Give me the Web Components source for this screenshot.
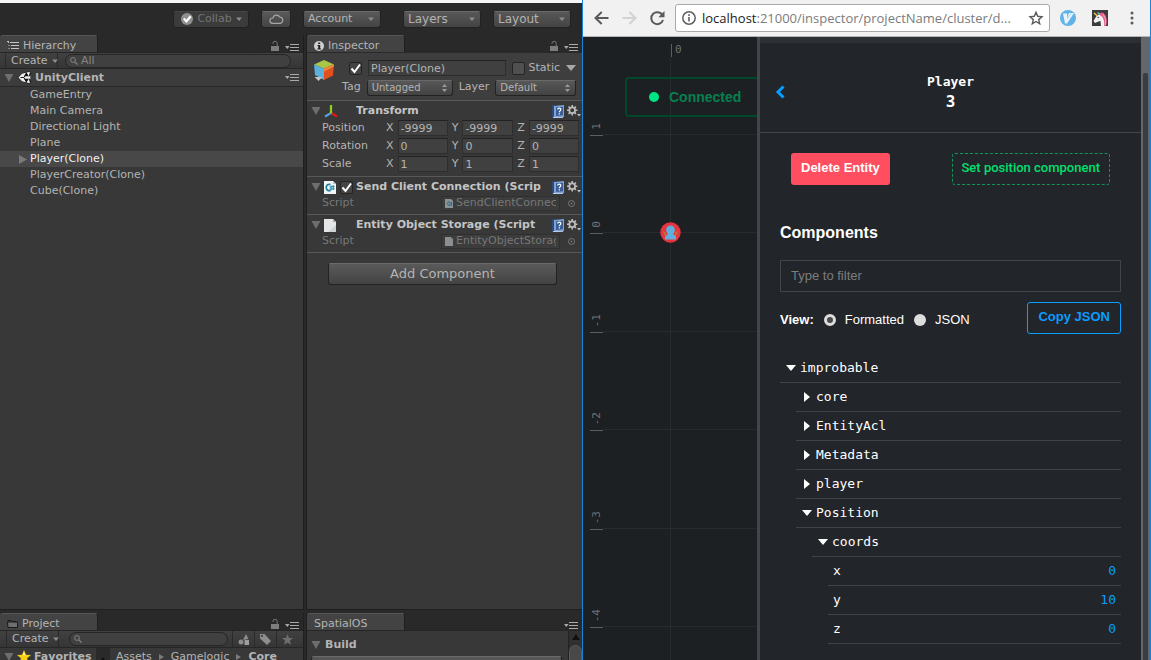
<!DOCTYPE html>
<html lang="en">
<head>
<meta charset="utf-8">
<title>Unity and SpatialOS Inspector</title>
<style>
body { margin: 0; height: 100vh; overflow: hidden; background: #292929; }
desktop-view { height: 100%; }
</style>
</head>
<body>
<desktop-view></desktop-view>
<script>
const define = (name, css, html) => {
  const tpl = document.createElement('template');
  tpl.innerHTML = `<style>*{box-sizing:border-box}:host{box-sizing:border-box}${css}</style>${html}`;
  customElements.define(name, class extends HTMLElement {
    constructor() {
      super();
      this.attachShadow({ mode: 'open' }).append(tpl.content.cloneNode(true));
    }
  });
};

/* ---------- icons: [width, height, drawing] ---------- */
const ICONS = {
  caret: [6, 4, '<path d="M0 0.500h6L3 4z" fill="#8c8c8c"/>'],
  drop: [10, 6, '<path d="M0 0h10L5 6z" fill="#a8a8a8"/>'],
  foldopen: [10, 8, '<path d="M0.5 0h9L5 8z" fill="#6e6e6e"/>'],
  foldclosed: [8, 9, '<path d="M0 0l8 4.5L0 9z" fill="#7a7a7a"/>'],
  updown: [5, 8, '<path d="M2.5 0L5 3H0zM0 5h5L2.5 8z" fill="#9a9a9a"/>'],
  lock: [8, 10, '<path d="M0 5h8v5H0z" fill="#7d7d7d"/><path d="M2 3V2.4a2.1 2.1 0 0 1 4.2 0V5" fill="none" stroke="#777" stroke-width="1"/>'],
  menu: [14, 7, '<path d="M0 2h4.6L2.3 5z" fill="#aaa"/><path d="M5 .5h9M5 3.500h9M5 6.500h9" stroke="#aaa" stroke-width="1"/>'],
  hier: [12, 9, '<path d="M0 .5h2M3 1.500h9M4 4.500h8M4 7.500h8M1.500 1v1M1.500 4.500h1M1.500 7.500h1" stroke="#c4c4c4"/>'],
  info: [10, 10, '<circle cx="5" cy="5" r="5" fill="#d0d0d0"/><path d="M4.200 1.500h2v1.500h-2zM3.500 4h2.700v3.500H7v1H3.300v-1h.9V5h-.7z" fill="#222"/>'],
  folder: [11, 9, '<path d="M1 3.500V1.500h3l1 1h4v1" fill="none" stroke="#1c1c1c"/><path d="M.5 3h10v5.500H1z" fill="#6f6f6f" stroke="#1a1a1a"/>'],
  search: [8, 8, '<circle cx="3" cy="3" r="2.400" fill="none" stroke="#848484"/><path d="M5 5l2.600 2.600" stroke="#848484" stroke-width="1.300"/>'],
  unity: [13, 13, '<path d="M0 6.500L4 2.500l8-2.500 1 3v7l-1 3-8-2.500z" fill="#111"/><path d="M.5 6.500L4 2.800l4-1-1.800 3.500H12l-.2-4.300.7 5.500-.7 5.500.2-4.300H6.200L8 11.200l-4-1z" fill="#eee"/><path d="M12 .8l-3.500.8L10.800 5.200zM12 12.200l-3.500-.8 2.300-3.600z" fill="#eee"/><path d="M2.500 6.500h3.300L8 3M5.800 6.500L8 10" stroke="#111" fill="none"/>'],
  collab: [12, 12, '<circle cx="6" cy="6" r="6" fill="#909090"/><path d="M2.800 5.600l2.600 2.800 4.300-5.200" fill="none" stroke="#fff" stroke-width="2.200"/>'],
  cloud: [15, 10, '<path d="M3.500 9.400a2.700 2.700 0 0 1 .3-5.400A3.800 3.800 0 0 1 10.800 3 3.300 3.300 0 0 1 11.500 9.400z" fill="none" stroke="#a6a6a6" stroke-width="1.200"/>'],
  cube: [22, 21, '<path d="M1 4.500L11 0l10 4.500-10 4z" fill="#a9c646"/><path d="M1 4.500l10 4V20L2 15z" fill="#5bb1dc"/><path d="M21 4.500l-10 4V20l9-4.500z" fill="#e2501d"/><path d="M21 4.500l-10 4v3l10-5z" fill="#f08a3c"/><path d="M1.500 17h8l-4 4z" fill="#c4c4c4"/>'],
  axis: [14, 13, '<path d="M7 8L1 11.500" stroke="#4aa0e8" stroke-width="2.200"/><path d="M7 8l6 3.500" stroke="#e01818" stroke-width="2.200"/><path d="M7 0v8.500" stroke="#8fd018" stroke-width="2.200"/>'],
  book: [12, 13, '<path d="M0 0h3v13H0z" fill="#2c4a78"/><path d="M2 1l10-1v12L2 13z" fill="#7fa4d4"/><path d="M4 2.300l7-.5v8.400l-7 .7z" fill="#3a5d95"/><path d="M5.600 4.500c.3-1.800 3.300-1.700 3.200.1 0 1.300-1.500 1.200-1.500 2.600M7.300 8.200v1.400" fill="none" stroke="#fff" stroke-width="1.200"/><path d="M1 12.500h10" stroke="#cfe0f5" stroke-width=".8"/>'],
  gear: [14, 12, '<circle cx="5.200" cy="5.200" r="2.900" fill="none" stroke="#bdbdbd" stroke-width="1.800"/><g stroke="#bdbdbd" stroke-width="1.600"><path d="M5.200 0v2M5.200 8.400v2M0 5.200h2M8.400 5.200h2M1.500 1.500L3 3M7.400 7.400l1.500 1.500M1.500 8.900L3 7.400M7.400 3l1.500-1.500"/></g><path d="M10 9h4l-2 2.500z" fill="#bdbdbd"/>'],
  cs: [12, 13, '<path d="M0 0h9l3 3v10H0z" fill="#f2f5f6"/><path d="M9 0v3h3z" fill="#b8c2c8"/><path d="M6.500 3.600A3 3.200 0 1 0 6.500 9.400" fill="none" stroke="#167f9f" stroke-width="1.700"/><path d="M7 4.500v5M9.200 4v5M5.600 6l5-.4M5.600 8.200l5-.4" stroke="#167f9f" stroke-width=".9"/>'],
  doc: [12, 13, '<path d="M0 0h9l3 3v10H0z" fill="#e4e6e7"/><path d="M9 0v3h3z" fill="#a5a9ab"/><path d="M12 6v7H4z" fill="#cfd2d3"/>'],
  cssmall: [8, 9, '<path d="M0 0h6l2 2v7H0z" fill="#8b9296"/><path d="M4.500 2.600a2 2 0 1 0 0 4M5 3v4M6.500 3v4" fill="none" stroke="#2c6f88"/>'],
  docsmall: [8, 9, '<path d="M0 0h6l2 2v7H0z" fill="#8c8e8f"/><path d="M6 0v2h2z" fill="#666"/>'],
  target: [7, 7, '<circle cx="3.500" cy="3.500" r="3" fill="none" stroke="#7c7c7c" stroke-width=".9"/><circle cx="3.500" cy="3.500" r=".8" fill="#8a8a8a"/>'],
  filter: [11, 11, '<circle cx="3" cy="8" r="2.500" fill="#8d8d8d"/><path d="M5 6l3-6 2.500 5z" fill="#8d8d8d"/><path d="M6.500 6h4.500v5H6.500z" fill="#9d9d9d"/>'],
  tag: [11, 11, '<path d="M0 0h4.500L11 7l-4 4L0 4.500z" fill="#8d8d8d"/><circle cx="2" cy="2" r="1" fill="#333"/>'],
  star: [11, 11, '<path d="M5.500 0l1.500 3.900 4 .2L7.900 6.700 9 10.800 5.500 8.500 2 10.800l1.100-4.100L0 4.100l4-.2z" fill="#6e6e6e"/>'],
  fav: [14, 14, '<path d="M7 0l2 4.700 5 .4-3.900 3.200L11.400 13.500 7 10.600l-4.400 2.900L3.900 8.300 0 5.100l5-.4z" fill="#f7cf12"/><path d="M7 1.500l1.300 3.700-2.600.3z" fill="#fff3a0"/>'],
  crumb: [5, 6, '<path d="M0 0l5 3-5 3z" fill="#7c7c7c"/>'],
  scrollup: [8, 6, '<path d="M4 0l4 6H0z" fill="#111"/>'],
  back: [15, 14, '<path d="M14.500 7H2M7.700 1L1.500 7l6.200 6" fill="none" stroke="#5a5a5a" stroke-width="2"/>'],
  forward: [15, 14, '<path d="M.5 7H13M7.300 1l6.200 6-6.200 6" fill="none" stroke="#d2d2d2" stroke-width="2"/>'],
  reload: [15, 14, '<path d="M12.500 4.200A6 6 0 1 0 13 9" fill="none" stroke="#5a5a5a" stroke-width="2"/><path d="M14.500 0v6.200H8.300z" fill="#5a5a5a"/>'],
  site: [14, 14, '<circle cx="7" cy="7" r="6.200" fill="none" stroke="#5f5f5f" stroke-width="1.500"/><path d="M7 6v4.500M7 3.300v1.600" stroke="#5f5f5f" stroke-width="1.600"/>'],
  bookmark: [14, 14, '<path d="M7 1.300l1.700 4 4.300.4-3.300 2.900 1 4.200L7 10.500l-3.700 2.300 1-4.200L1 5.700l4.300-.4z" fill="none" stroke="#5a5a5a" stroke-width="1.400"/>'],
  vim: [16, 16, '<circle cx="8" cy="8" r="8" fill="#62b3e6"/><path d="M3 3.500h4l.3 5.500L11.500 3H14L7 13.500H5z" fill="#e9f5fc"/><path d="M9 3l2 0-4 5.800z" fill="#f9fdff"/>'],
  unicorn: [16, 16, '<path d="M0 0h16v16H0z" fill="#3c3c3c"/><path d="M1.500 11l3-5L8 4l4 4 1 8H9l-.5-5-2 .5-3.500 1.500z" fill="#f3f0f2"/><path d="M7 3l4-.5 3 3.500 1 6-1 4h-2l.5-4-2-5L7 4.500z" fill="#e85b86"/><path d="M11 4l2.500 5-.3 6" fill="none" stroke="#f6a5bd"/><path d="M2 3l3.500 3" stroke="#f1c84b" stroke-width="1.500"/><path d="M5.500 2.500l2 2" stroke="#53c3c4" stroke-width="1.500"/><circle cx="6.200" cy="7.500" r=".7" fill="#333"/>'],
  dots: [4, 14, '<circle cx="2" cy="2" r="1.500" fill="#5a5a5a"/><circle cx="2" cy="7" r="1.500" fill="#5a5a5a"/><circle cx="2" cy="12" r="1.500" fill="#5a5a5a"/>'],
  chevron: [9, 14, '<path d="M7.500 1.500L2 7l5.500 5.500" fill="none" stroke="#0a9cff" stroke-width="3"/>'],
  treeopen: [10, 6, '<path d="M0 0h10L5 6z" fill="#fff"/>'],
  treeclosed: [6, 10, '<path d="M0 0l6 5-6 5z" fill="#fff"/>'],
  player: [21, 21, '<circle cx="10.500" cy="10.500" r="10.200" fill="#e8343c"/><path d="M3 9l3 1.500v4l-2-2zM18 9l-3 1.500v4l2-2z" fill="#b0743c"/><path d="M10.500 3.500a4.200 4.200 0 0 1 4.300 4.500c0 2-1 3.200-1.800 4l3 2.500v3H5v-3L8 12C7.200 11.200 6.200 10 6.200 8a4.200 4.200 0 0 1 4.300-4.500z" fill="#5fb0dc"/>'],
};
customElements.define('ui-icon', class extends HTMLElement {
  constructor() { super(); this.attachShadow({ mode: 'open' }); }
  connectedCallback() {
    const [w, h, body] = ICONS[this.getAttribute('name')];
    this.shadowRoot.innerHTML = `<style>:host{display:inline-block;flex:none}svg{display:block;overflow:visible}</style>
      <svg width="${w}" height="${h}" viewBox="0 0 ${w} ${h}" aria-hidden="true">${body}</svg>`;
  }
});

/* ---------- shared Unity controls ---------- */
define('unity-button', `
  :host{display:block;height:17px}
  button{display:flex;align-items:center;justify-content:var(--justify,space-between);gap:4px;width:100%;height:100%;padding:var(--pad,0 6px);
    font:inherit;color:inherit;border:1px solid #222;border-top-color:#6a6a6a;border-radius:3px;background:linear-gradient(#5a5a5a,#434343)}
  :host([dim]) button{background:#3b3b3b;border-top-color:#444;color:#757575}
  :host([flat]) button{background:none;border:0;border-radius:0}`,
  `<button type="button"><slot></slot></button>`);

customElements.define('unity-select', class extends HTMLElement {
  constructor() { super(); this.attachShadow({ mode: 'open' }); }
  connectedCallback() {
    this.shadowRoot.innerHTML = `<style>
      :host{display:grid;align-items:center;height:17px}
      select,ui-icon{grid-area:1/1}
      select{appearance:none;box-sizing:border-box;width:100%;height:100%;margin:0;padding:0 16px 0 4px;font:inherit;color:inherit;
        border:1px solid #222;border-top-color:#6a6a6a;border-radius:3px;background:linear-gradient(#585858,#434343)}
      ui-icon{justify-self:end;margin-right:6px;pointer-events:none}</style>
      <select aria-label="${this.getAttribute('label')}"><option>${this.getAttribute('value')}</option></select>
      <ui-icon name="${this.getAttribute('icon')}"></ui-icon>`;
  }
});

customElements.define('unity-field', class extends HTMLElement {
  constructor() { super(); this.attachShadow({ mode: 'open' }); }
  connectedCallback() {
    const axis = this.getAttribute('axis');
    this.shadowRoot.innerHTML = `<style>
      :host{display:block;min-width:0}
      label{display:flex;align-items:center;gap:4px}
      input{flex:1;min-width:0;width:100%;height:16px;box-sizing:border-box;margin:0;padding:0 2px;font:inherit;color:inherit;
        border:1px solid #2d2d2d;border-top-color:#222;background:#404040}</style>
      <label>${axis ? `<span>${axis}</span>` : ''}<input value="${this.getAttribute('value')}" aria-label="${this.getAttribute('label')}"></label>`;
  }
});

define('unity-check', `
  :host{display:block;width:13px;height:13px}
  input{appearance:none;display:block;width:13px;height:13px;margin:0;border:1px solid #242424;border-radius:2px;background:#505050}
  :host([on]) input{background:#444 url('data:image/svg+xml,<svg xmlns="http://www.w3.org/2000/svg" viewBox="0 0 11 11"><path d="M1.500 5.500l3 3.500L10 1.500" fill="none" stroke="white" stroke-width="2"/></svg>') center/11px no-repeat}`,
  `<input type="checkbox" aria-label="Enabled">`);
const mark = root => root.querySelectorAll('unity-check[on]').forEach(c => c.shadowRoot.querySelector('input').checked = true);

define('panel-tabs', `
  :host{display:flex;align-items:flex-end;justify-content:space-between;height:17px;background:#292929;flex:none}
  .tab{display:flex;align-items:center;gap:4px;width:98px;height:17px;padding:3px 7px 0;background:#434343;border-top:1px solid #565656;
    border-right:1px solid #1f1f1f;border-radius:3px 3px 0 0}
  .tools{display:flex;align-items:flex-end;gap:6px;padding:0 4px 1px 0}`,
  `<div class="tab"><slot></slot></div><div class="tools"><slot name="lock"></slot><ui-icon name="menu"></ui-icon></div>`);

define('search-box', `
  :host{display:block;flex:1;min-width:0}
  label{display:flex;align-items:center;height:14px;padding:0 4px;gap:3px;border:1px solid #252525;border-radius:7px;background:#404040}
  input{flex:1;min-width:0;border:0;padding:0;background:none;font:inherit;color:#858585;outline:0}
  input::placeholder{color:#858585;opacity:1}`,
  `<label><ui-icon name="search"></ui-icon><slot></slot><input type="text" aria-label="Search"></label>`);

/* ---------- Unity toolbar ---------- */
define('unity-toolbar', `
  :host{display:flex;justify-content:flex-end;align-items:center;gap:12px;height:35px;flex:none;border-top:3px solid #f6f6f6;padding:0 11px;font-size:12px}
  .collab{width:76px;font-size:11px;--pad:0 6px 0 7px}
  .cloud{width:30px;--justify:center}
  .menu{width:78px}
  .account{margin-right:10px;font-size:11px;--pad:0 6px 0 4px}`,
  `<unity-button class="collab" dim><ui-icon name="collab"></ui-icon><span>Collab</span><ui-icon name="caret"></ui-icon></unity-button>
   <unity-button class="cloud"><ui-icon name="cloud"></ui-icon></unity-button>
   <unity-button class="menu account"><span>Account</span><ui-icon name="caret"></ui-icon></unity-button>
   <unity-select class="menu" label="Layers" value="Layers" icon="caret"></unity-select>
   <unity-select class="menu" label="Layout" value="Layout" icon="caret"></unity-select>`);

/* ---------- Hierarchy ---------- */
define('hierarchy-panel', `
  :host{display:flex;flex-direction:column;min-width:0;background:#383838;border-right:1px solid #1f1f1f;border-bottom:1px solid #1f1f1f}
  .bar{display:flex;align-items:center;height:17px;padding:0 12px 0 5px;background:linear-gradient(#414141,#353535);border-top:1px solid #262626;border-bottom:1px solid #262626}
  .create{width:53px;height:15px;margin-right:7px;border:solid #2a2a2a;border-width:0 1px;--pad:0 3px 0 5px}
  .scene{display:flex;align-items:center;gap:4px;height:18px;padding:0 4px;font-weight:bold;border-bottom:1px solid #282828;background:#3c3c3c}
  .scene ui-icon:last-child{margin-left:auto}
  ul{list-style:none;margin:0;padding:0}
  li{display:flex;align-items:center;height:16px;padding-left:30px}
  li.on{background:#484848;color:#f0f0f0;padding-left:19px;gap:3px}`,
  `<panel-tabs><ui-icon name="hier"></ui-icon>Hierarchy<ui-icon slot="lock" name="lock"></ui-icon></panel-tabs>
   <div class="bar"><unity-button flat class="create">Create<ui-icon name="caret"></ui-icon></unity-button><search-box></search-box></div>
   <div class="scene"><ui-icon name="foldopen"></ui-icon><ui-icon name="unity"></ui-icon><span>UnityClient</span><ui-icon name="menu"></ui-icon></div>
   <ul><li>GameEntry</li><li>Main Camera</li><li>Directional Light</li><li>Plane</li>
   <li class="on"><ui-icon name="foldclosed"></ui-icon>Player(Clone)</li><li>PlayerCreator(Clone)</li><li>Cube(Clone)</li></ul>`);

/* ---------- Inspector ---------- */
define('component-head', `
  :host{display:grid;grid-template-columns:10px 13px 13px minmax(0,1fr) 12px 14px;column-gap:3px;align-items:center;height:18px;padding:2px 1px 0 4px}
  h2{margin:0;font-size:inherit;font-weight:bold;white-space:nowrap;overflow:hidden;color:#c4c4c4}
  .check{display:block}`,
  `<ui-icon name="foldopen"></ui-icon><slot name="icon"></slot><span class="check"><slot name="check"></slot></span>
   <h2><slot></slot></h2><ui-icon name="book"></ui-icon><ui-icon name="gear"></ui-icon>`);

define('script-row', `
  :host{display:flex;align-items:center;height:16px;padding:0 7px 0 15px;color:#777}
  .name{flex:1}
  .object{display:flex;align-items:center;gap:3px;width:119px;height:15px;margin-right:8px;padding:0 3px;overflow:hidden;white-space:nowrap;background:#3c3c3c;border:1px solid #303030}
  .object span{overflow:hidden}`,
  `<span class="name">Script</span><div class="object"><slot name="icon"></slot><span><slot></slot></span></div><ui-icon name="target"></ui-icon>`);

define('inspector-panel', `
  :host{display:flex;flex-direction:column;min-width:0;overflow:hidden;background:#383838;border-left:1px solid #1f1f1f;border-bottom:1px solid #1f1f1f}
  header{height:48px;padding:7px 6px 0;border-top:1px solid #2a2a2a;background:#3e3e3e;display:grid;grid-template-columns:22px minmax(0,1fr);column-gap:7px}
  .row{display:flex;align-items:center;gap:6px;height:16px;padding-left:7px}
  .row+.row{margin-top:3px;padding-left:0}
  .grow{flex:1}
  .static{display:flex;align-items:center;gap:4px}
  .tags unity-select{height:15px;font-size:10px}
  .tag{width:86px}.layer{flex:1}
  section{border-top:1px solid #585858;padding-bottom:3px}
  .vec{display:grid;grid-template-columns:60px repeat(3,minmax(0,1fr));column-gap:4px;align-items:center;height:18px;padding:0 3px 0 15px}
  .last{border-top:1px solid #585858;padding:10px 25px 0 21px}
  .last unity-button{height:22px;font-size:13px;--justify:center}`,
  `<panel-tabs><ui-icon name="info"></ui-icon>Inspector<ui-icon slot="lock" name="lock"></ui-icon></panel-tabs>
   <header><ui-icon name="cube"></ui-icon><div>
     <div class="row"><unity-check on></unity-check><unity-field class="grow" label="Name" value="Player(Clone)"></unity-field><span class="static"><unity-check></unity-check>Static</span><ui-icon name="drop"></ui-icon></div>
     <div class="row tags"><span>Tag</span><unity-select class="tag" label="Tag" value="Untagged" icon="updown"></unity-select><span>Layer</span><unity-select class="layer" label="Layer" value="Default" icon="updown"></unity-select></div>
   </div></header>
   <section><component-head><ui-icon slot="icon" name="axis"></ui-icon>Transform</component-head>
     ${[['Position', '-9999'], ['Rotation', '0'], ['Scale', '1']].map(([n, v]) =>
       `<div class="vec"><span>${n}</span>${['X', 'Y', 'Z'].map(a => `<unity-field axis="${a}" label="${n} ${a}" value="${v}"></unity-field>`).join('')}</div>`).join('')}
     </section>
   <section><component-head><ui-icon slot="icon" name="cs"></ui-icon><unity-check slot="check" on></unity-check>Send Client Connection (Scrip</component-head>
     <script-row><ui-icon slot="icon" name="cssmall"></ui-icon>SendClientConnec</script-row></section>
   <section><component-head><ui-icon slot="icon" name="doc"></ui-icon>Entity Object Storage (Script</component-head>
     <script-row><ui-icon slot="icon" name="docsmall"></ui-icon>EntityObjectStorag</script-row></section>
   <div class="last"><unity-button>Add Component</unity-button></div>`);

/* ---------- Project ---------- */
define('project-panel', `
  :host{display:flex;flex-direction:column;min-width:0;overflow:hidden;background:#383838;border-right:1px solid #1f1f1f}
  .bar{display:flex;align-items:center;flex:none;height:18px;padding:0 5px 0 6px;background:linear-gradient(#414141,#353535);border-top:1px solid #262626;border-bottom:1px solid #262626}
  .create{width:53px;height:16px;margin-right:10px;border:solid #2a2a2a;border-width:0 1px;--pad:0 3px 0 5px}
  search-box{margin-right:4px}
  .tool{width:22px;height:16px;border-left:1px solid #2a2a2a;--justify:center;--pad:0}
  .body{display:grid;grid-template-columns:96px 14px minmax(0,1fr);flex:1}
  .fav,nav{display:flex;align-items:center;height:18px}
  .fav{padding-left:4px;gap:3px;font-weight:bold;overflow:hidden}
  .scroll{background:#2a2a2a;padding:5px 3px}
  nav{padding-left:6px;gap:7px}
  a{color:inherit;text-decoration:none}`,
  `<panel-tabs><ui-icon name="folder"></ui-icon>Project<ui-icon slot="lock" name="lock"></ui-icon></panel-tabs>
   <div class="bar"><unity-button flat class="create">Create<ui-icon name="caret"></ui-icon></unity-button><search-box></search-box>
   <unity-button flat class="tool"><ui-icon name="filter"></ui-icon></unity-button><unity-button flat class="tool"><ui-icon name="tag"></ui-icon></unity-button><unity-button flat class="tool"><ui-icon name="star"></ui-icon></unity-button></div>
   <div class="body"><div class="fav"><ui-icon name="foldopen"></ui-icon><ui-icon name="fav"></ui-icon>Favorites</div><div class="scroll"><ui-icon name="scrollup"></ui-icon></div>
   <nav><a href="#assets">Assets</a><ui-icon name="crumb"></ui-icon><a href="#gamelogic">Gamelogic</a><ui-icon name="crumb"></ui-icon><a href="#core"><b>Core</b></a></nav></div>`);

define('spatial-panel', `
  :host{display:flex;flex-direction:column;min-width:0;overflow:hidden;background:#383838;border-left:1px solid #1f1f1f}
  .body{display:grid;grid-template-columns:minmax(0,1fr) 14px;flex:1;min-height:0;border-top:1px solid #262626}
  .main{padding:6px 6px 0 4px}
  h2{display:flex;align-items:center;gap:4px;height:16px;margin:0 0 3px;font-size:11px}
  .scroll{background:#303030;border-left:1px solid #222;overflow:hidden}
  .scroll ui-icon{display:block;margin:3px 2px 5px 3px}
  .thumb{height:40px;border-radius:7px;background:#484848;border:1px solid #5c5c5c}`,
  `<panel-tabs>SpatialOS</panel-tabs>
   <div class="body"><div class="main"><h2><ui-icon name="foldopen"></ui-icon>Build</h2><unity-select label="Build target" value="Develop" icon="updown"></unity-select></div>
   <div class="scroll"><ui-icon name="scrollup"></ui-icon><div class="thumb"></div></div></div>`);

define('unity-editor', `
  :host{display:flex;flex-direction:column;min-width:0;min-height:0;background:#292929;color:#b4b4b4;font:11px/14px "DejaVu Sans",sans-serif}
  .grid{flex:1;min-height:0;display:grid;grid-template-columns:minmax(0,304fr) minmax(0,276fr);grid-template-rows:minmax(0,1fr) 47px;gap:3px 2px}`,
  `<unity-toolbar></unity-toolbar><div class="grid"><hierarchy-panel></hierarchy-panel><inspector-panel></inspector-panel><project-panel></project-panel><spatial-panel></spatial-panel></div>`);

/* ---------- Browser ---------- */
define('browser-bar', `
  :host{display:flex;align-items:center;height:37px;flex:none;padding:0 16px 0 11px;background:#f1f1f1;border-bottom:1px solid #b5b5b5}
  button{display:flex;border:0;padding:0;margin:0 13px 0 0;background:none}
  .reload{margin-right:10px}
  .url{display:flex;align-items:center;flex:1;min-width:0;height:28px;padding:0 6px;gap:6px;border:1px solid #a9a9a9;border-radius:3px;background:#fff}
  .url span{flex:1;min-width:0;overflow:hidden;white-space:nowrap;font:13px/20px "Open Sans",sans-serif;color:#7b7b7b}
  .url b{font-weight:400;color:#222}
  .ext{margin:0 0 0 16px}.first{margin-left:10px}.more{margin:0 0 0 22px}`,
  `<button type="button" aria-label="Back"><ui-icon name="back"></ui-icon></button><button type="button" aria-label="Forward"><ui-icon name="forward"></ui-icon></button>
   <button type="button" class="reload" aria-label="Reload"><ui-icon name="reload"></ui-icon></button>
   <div class="url"><ui-icon name="site"></ui-icon><span><b>localhost</b>:21000/inspector/projectName/cluster/d...</span><ui-icon name="bookmark"></ui-icon></div>
   <button type="button" class="ext first" aria-label="Vim extension"><ui-icon name="vim"></ui-icon></button><button type="button" class="ext" aria-label="Unicorn extension"><ui-icon name="unicorn"></ui-icon></button>
   <button type="button" class="more" aria-label="Menu"><ui-icon name="dots"></ui-icon></button>`);

/* The map is a free canvas: grid lines, ruler ticks and entity pins are placed by coordinate. */
define('world-map', `
  :host{display:block;position:relative;overflow:hidden;min-width:0;background:#1c2022;color:#6a737a;font:11px/11px "DejaVu Sans Mono",monospace}
  .v,.h,.tick,.pin,.status,.mark,.top{position:absolute}
  .v{left:87px;top:20px;bottom:0;width:1px;background:#272b2e}
  .h{left:20px;right:0;top:var(--y);height:1px;background:#272b2e}
  .tick{left:7px;width:13px;top:var(--y);height:1px;background:#5b5f62}
  .mark{left:8px;bottom:calc(100% - var(--y) + 4px);writing-mode:vertical-rl;transform:rotate(180deg)}
  .top{left:88px;top:7px;height:13px;padding-left:3px;border-left:1px solid #5b5f62;line-height:11px}
  .status{left:42px;top:40px;width:180px;height:40px;display:flex;align-items:center;gap:10px;padding-left:22px;border:2px solid #00472b;border-radius:4px;color:#058050;font:bold 14px/18px "Liberation Sans",sans-serif}
  .status i{width:10px;height:10px;border-radius:50%;background:#00e584}
  .pin{left:77px;top:185px}`,
  `<div class="v"></div>${[[97, '1'], [195, '0'], [294, '-1'], [392, '-2'], [491, '-3'], [589, '-4']].map(([y, t]) =>
    `<div class="h" style="--y:${y}px"></div><div class="tick" style="--y:${y + 1}px"></div><span class="mark" style="--y:${y}px">${t}</span>`).join('')}
   <span class="top">0</span><div class="status"><i></i>Connected</div><ui-icon class="pin" name="player"></ui-icon>`);

customElements.define('tree-row', class extends HTMLElement {
  constructor() { super(); this.attachShadow({ mode: 'open' }); }
  connectedCallback() {
    const open = this.getAttribute('state'), value = this.getAttribute('value');
    this.shadowRoot.innerHTML = `<style>
      :host{display:flex;align-items:center;justify-content:space-between;box-sizing:border-box;height:29px;padding:0 5px;border-bottom:1px solid #3e4347}
      .name{display:flex;align-items:center}
      .arrow{display:flex;justify-content:center;width:12px;margin-right:3px}
      .value{color:#0a9cff}</style>
      <span class="name">${open ? `<span class="arrow"><ui-icon name="tree${open}"></ui-icon></span>` : ''}<slot></slot></span>
      ${value ? `<span class="value">${value}</span>` : ''}`;
  }
});

define('entity-panel', `
  :host{display:flex;min-width:0;background:#222529;border-left:3px solid #41464d;color:#fff;font:13px/16px "Liberation Sans",sans-serif}
  .page{flex:1;min-width:0;border-top:6px solid #2b3033}
  header{display:grid;grid-template-columns:20px 1fr 20px;align-items:center;height:90px;padding:8px 16px 0;border-bottom:1px solid #41464d;font:bold 13px/20px "DejaVu Sans Mono",monospace;text-align:center}
  header button{border:0;padding:0;background:none;display:flex}
  h1{margin:0;font:inherit}
  h1 span{display:block}
  h1 .id{font-size:16px}
  main{padding:20px 20px 0}
  .actions{display:flex;justify-content:space-between;padding:0 11px}
  .btn{height:32px;padding:0 10px 2px;font:bold 13px/16px "Liberation Sans",sans-serif;border-radius:3px;background:none}
  .delete{color:#fff;border:0;background:#ff4e5f}
  .set{padding:0 9px 2px;color:#00e070;border:1px dashed #12955c;font:500 13px/16px Roboto,sans-serif}
  .copy{color:#0a9cff;border:1px solid #0a9cff}
  h2{margin:38px 0 17px;font-size:16px;line-height:20px}
  .filter{display:block;width:100%;height:32px;padding:0 10px 2px;font:inherit;color:#fff;border:1px solid #41464d;background:none}
  .filter::placeholder{color:#7c7e80;opacity:1}
  .view{display:flex;align-items:center;margin:10px 0 20px}
  .view b,.view label{padding-top:3px}
  .view label{display:flex;align-items:center;margin-left:10px;gap:9px}
  .view .copy{margin-left:auto}
  input[type=radio]{appearance:none;width:12px;height:12px;margin:0;border-radius:50%;background:#ddd}
  input[type=radio]:checked{border:3px solid #ddd;background:#4a4a4a}
  .tree{font:13px/16px "DejaVu Sans Mono",monospace}
  .tree div{margin-left:16px}
  .scroll{width:9px;padding:36px 2px 0;background:#63666a}
  .thumb{height:100%;border-radius:2px 2px 0 0;background:#3a3c40}`,
  `<div class="page"><header><button type="button" aria-label="Back"><ui-icon name="chevron"></ui-icon></button><h1><span>Player</span><span class="id">3</span></h1></header>
   <main><div class="actions"><button type="button" class="btn delete">Delete Entity</button><button type="button" class="btn set">Set position component</button></div>
   <h2>Components</h2><input class="filter" type="text" placeholder="Type to filter" aria-label="Filter components">
   <div class="view"><b>View:</b><label><input type="radio" name="view" checked>Formatted</label><label><input type="radio" name="view">JSON</label><button type="button" class="btn copy">Copy JSON</button></div>
   <div class="tree"><tree-row state="open">improbable</tree-row><div>
     <tree-row state="closed">core</tree-row><tree-row state="closed">EntityAcl</tree-row><tree-row state="closed">Metadata</tree-row><tree-row state="closed">player</tree-row>
     <tree-row state="open">Position</tree-row><div><tree-row state="open">coords</tree-row><div>
       <tree-row value="0">x</tree-row><tree-row value="10">y</tree-row><tree-row value="0">z</tree-row></div></div></div></div></main></div>
   <div class="scroll"><div class="thumb"></div></div>`);

define('browser-window', `
  :host{display:flex;flex-direction:column;min-width:0;min-height:0;border:solid #1883d7;border-width:0 1px}
  .page{flex:1;min-height:0;display:grid;grid-template-columns:minmax(0,174fr) minmax(0,393fr);grid-template-rows:minmax(0,1fr)}`,
  `<browser-bar></browser-bar><div class="page"><world-map></world-map><entity-panel></entity-panel></div>`);

define('desktop-view', `
  :host{display:grid;grid-template-columns:minmax(0,582fr) minmax(0,569fr);grid-template-rows:minmax(0,1fr);overflow:hidden}`,
  `<unity-editor></unity-editor><browser-window></browser-window>`);

const editor = document.querySelector('desktop-view').shadowRoot.querySelector('unity-editor').shadowRoot;
mark(editor.querySelector('inspector-panel').shadowRoot);
editor.querySelector('hierarchy-panel').shadowRoot.querySelector('search-box').shadowRoot.querySelector('input').placeholder = 'All';
</script>
</body>
</html>
